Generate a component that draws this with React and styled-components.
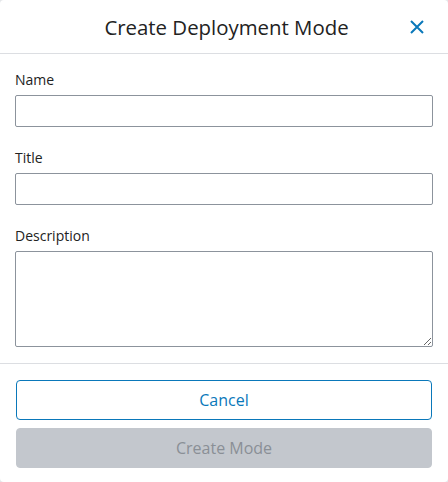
import React from "react";
import styled, { createGlobalStyle } from "styled-components";

const GlobalStyle = createGlobalStyle`
  html, body {
    margin: 0;
    padding: 0;
    background: #e4e6e9;
  }
  body {
    font-family: "Open Sans", "Noto Sans", Arial, sans-serif;
  }
`;

const Dialog = styled.div`
  width: 448px;
  height: 482px;
  background: #fff;
  border-radius: 4px;
  display: flex;
  flex-direction: column;
  box-sizing: border-box;
  overflow: hidden;
`;

const Header = styled.div`
  height: 53px;
  border-bottom: 1px solid #dcdee2;
  display: flex;
  align-items: center;
  position: relative;
  padding: 0 16px;
`;

const Title = styled.h2`
  flex: 1;
  margin: 0;
  padding-left: 5px;
  text-align: center;
  font-size: 20.4px;
  font-weight: 400;
  color: #222;
  line-height: 28px;
  padding-top: 1px;
`;

const CloseButton = styled.button`
  position: absolute;
  right: 22px;
  top: 18px;
  width: 18px;
  height: 18px;
  padding: 0;
  border: none;
  background: transparent;
  display: flex;
  align-items: center;
  justify-content: center;
  cursor: pointer;
`;

const Body = styled.div`
  padding: 16px 15px;
  display: flex;
  flex-direction: column;
  gap: 21px;
`;

const Field = styled.div`
  display: flex;
  flex-direction: column;
`;

const Label = styled.label`
  font-size: 14px;
  line-height: 20px;
  color: #222;
  margin-bottom: 5px;
`;

const Input = styled.input`
  box-sizing: border-box;
  width: 100%;
  height: 32px;
  border: 1px solid #8c939c;
  border-radius: 2px;
  padding: 0 8px;
  font-family: inherit;
  font-size: 14px;
  outline: none;
`;

const TextArea = styled.textarea`
  box-sizing: border-box;
  width: 100%;
  height: 96px;
  border: 1px solid #8c939c;
  border-radius: 2px;
  padding: 6px 8px;
  font-family: inherit;
  font-size: 14px;
  outline: none;
  display: block;
`;

const Footer = styled.div`
  border-top: 1px solid #dcdee2;
  padding: 16px 16px 14px;
  display: flex;
  flex-direction: column;
  gap: 8px;
`;

const Button = styled.button`
  box-sizing: border-box;
  height: 40px;
  width: 100%;
  border-radius: 4px;
  font-family: inherit;
  font-size: 16px;
  cursor: pointer;
  border: 1px solid ${(p) => (p.$primary ? "#c3c7cd" : "#0a78ba")};
  background: ${(p) => (p.$primary ? "#c3c7cd" : "#fff")};
  color: ${(p) => (p.$primary ? "#8a8f96" : "#0a78ba")};
  &:disabled {
    cursor: default;
  }
`;

const CloseIcon = () => (
  <svg width="16" height="16" viewBox="0 0 16 16">
    <path d="M2 2 L14 14 M14 2 L2 14" stroke="#0a78ba" strokeWidth="2" strokeLinecap="butt" fill="none" />
  </svg>
);

export default function App() {
  return (
    <>
      <GlobalStyle />
      <Dialog>
        <Header>
          <Title>Create Deployment Mode</Title>
          <CloseButton aria-label="Close">
            <CloseIcon />
          </CloseButton>
        </Header>
        <Body>
          <Field>
            <Label>Name</Label>
            <Input />
          </Field>
          <Field>
            <Label>Title</Label>
            <Input />
          </Field>
          <Field>
            <Label>Description</Label>
            <TextArea />
          </Field>
        </Body>
        <Footer>
          <Button>Cancel</Button>
          <Button $primary disabled>Create Mode</Button>
        </Footer>
      </Dialog>
    </>
  );
}
